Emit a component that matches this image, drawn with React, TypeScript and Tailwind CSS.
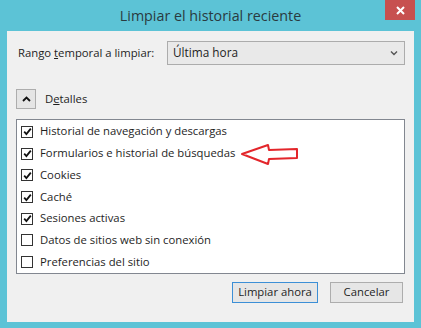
import React from 'react';

const items = [
  { label: 'Historial de navegación y descargas', checked: true },
  { label: 'Formularios e historial de búsquedas', checked: true },
  { label: 'Cookies', checked: true },
  { label: 'Caché', checked: true },
  { label: 'Sesiones activas', checked: true },
  { label: 'Datos de sitios web sin conexión', checked: false },
  { label: 'Preferencias del sitio', checked: false },
];

function CheckBox({ checked }: { checked: boolean }) {
  return (
    <span className="flex h-[12px] w-[12px] shrink-0 items-center justify-center border border-[#333] bg-white">
      {checked && (
        <svg width="9" height="9" viewBox="0 0 9 9">
          <path d="M1.2 4.6 L3.4 7 L7.8 1.6" fill="none" stroke="#111" strokeWidth="1.8" />
        </svg>
      )}
    </span>
  );
}

export default function App() {
  return (
    <div
      className="flex h-[328px] w-[421px] flex-col bg-[#5cc3d6] text-[#1e1e1e]"
      style={{ fontFamily: '"Open Sans", "Noto Sans", sans-serif' }}
    >
      {/* barra de título */}
      <div className="relative flex h-[31px] shrink-0 items-center justify-center">
        <span className="text-[14.3px] text-[#2a3a40]">Limpiar el historial reciente</span>
        <div className="absolute right-[6px] top-0 flex h-[20px] w-[30px] items-center justify-center bg-[#c7504f]">
          <svg width="9" height="9" viewBox="0 0 9 9">
            <path d="M1 1 L8 8 M8 1 L1 8" stroke="#fff" strokeWidth="2" />
          </svg>
        </div>
      </div>

      {/* contenido */}
      <div className="mx-[7px] flex h-[291px] flex-col bg-[#f0f0f0] px-[9px] text-[11.3px]">
        <div className="mt-[10px] flex items-center">
          <span className="w-[151px] pl-[2px]">
            Rango <span className="underline">t</span>emporal a limpiar:
          </span>
          <div className="flex h-[24px] w-[238px] items-center justify-between border border-[#acacac] bg-[#e9e9e9] pl-[5px] pr-[6px] text-[11.8px]">
            <span>Última hora</span>
            <svg width="8" height="6" viewBox="0 0 8 6">
              <path d="M1 1.5 L4 4.5 L7 1.5" fill="none" stroke="#555" strokeWidth="1.4" />
            </svg>
          </div>
        </div>

        <div className="mt-[24px] flex items-center gap-[9px]">
          <div className="flex h-[20px] w-[20px] items-center justify-center border border-[#adadad] bg-[#e5e5e5]">
            <svg width="9" height="6" viewBox="0 0 9 6">
              <path d="M1 5 L4.5 1.5 L8 5" fill="none" stroke="#111" strokeWidth="1.8" />
            </svg>
          </div>
          <span>
            D<span className="underline">e</span>talles
          </span>
        </div>

        <div className="relative mt-[10px] flex h-[155px] w-[389px] flex-col border border-[#828790] bg-white pt-[1px]">
          {items.map((it) => (
            <div key={it.label} className="flex h-[22px] items-center gap-[7px] pl-[4px]">
              <CheckBox checked={it.checked} />
              <span>{it.label}</span>
            </div>
          ))}
          {/* flecha roja */}
          <svg className="absolute left-[222px] top-[23px]" width="61" height="24" viewBox="0 0 61 24">
            <path
              d="M3 11 L29 2 L30 7 L58 6 L58 15 L30 16 L29 21 Z"
              fill="none"
              stroke="#e3262b"
              strokeWidth="2"
              strokeLinejoin="round"
            />
          </svg>
        </div>

        <div className="mt-[8px] flex justify-end gap-[12px] pr-[2px]">
          <div className="flex h-[21px] w-[86px] items-center justify-center border border-[#3c8fd6] bg-[#e6e6e6]">
            Limpiar ahora
          </div>
          <div className="flex h-[21px] w-[73px] items-center justify-center border border-[#adadad] bg-[#e6e6e6]">
            Cancelar
          </div>
        </div>
      </div>
    </div>
  );
}
